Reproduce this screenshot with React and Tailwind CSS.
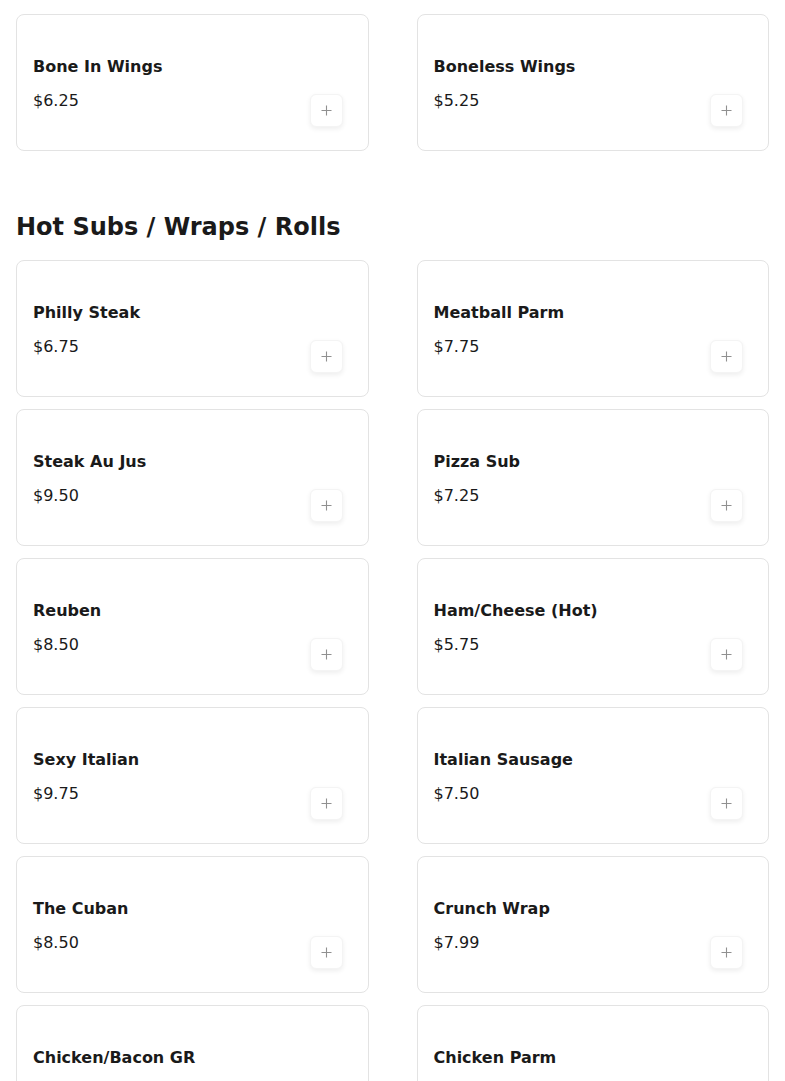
import React from "react";

const wings = [
  { name: "Bone In Wings", price: "$6.25" },
  { name: "Boneless Wings", price: "$5.25" },
];

const subs = [
  { name: "Philly Steak", price: "$6.75" },
  { name: "Meatball Parm", price: "$7.75" },
  { name: "Steak Au Jus", price: "$9.50" },
  { name: "Pizza Sub", price: "$7.25" },
  { name: "Reuben", price: "$8.50" },
  { name: "Ham/Cheese (Hot)", price: "$5.75" },
  { name: "Sexy Italian", price: "$9.75" },
  { name: "Italian Sausage", price: "$7.50" },
  { name: "The Cuban", price: "$8.50" },
  { name: "Crunch Wrap", price: "$7.99" },
  { name: "Chicken/Bacon GR", price: "$8.50" },
  { name: "Chicken Parm", price: "$7.75" },
];

function Card({ item }) {
  return (
    <div className="relative h-[137px] rounded-lg border border-[#e3e3e3] bg-white px-4 pt-[40px]">
      <div className="text-[16px] font-bold leading-6 text-[#1a1a1a]">{item.name}</div>
      <div className="mt-[10px] text-[16px] leading-6 text-[#1a1a1a]">{item.price}</div>
      <button className="absolute right-[25px] bottom-[23px] flex h-[33px] w-[33px] items-center justify-center rounded-md border border-[#f4f4f4] bg-white shadow-[0_2px_5px_rgba(0,0,0,0.07)]">
        <svg width="11" height="11" viewBox="0 0 11 11">
          <path d="M5.5 0.5v10M0.5 5.5h10" stroke="#909090" strokeWidth="1.1" fill="none" />
        </svg>
      </button>
    </div>
  );
}

export default function App() {
  return (
    <div
      className="min-h-screen bg-white px-4 pt-[14px]"
      style={{ fontFamily: '"DejaVu Sans", sans-serif' }}
    >
      <div className="grid grid-cols-2 gap-x-12 gap-y-3">
        {wings.map((it) => (
          <Card key={it.name} item={it} />
        ))}
      </div>
      <h2 className="mt-[60px] mb-[17px] text-[24px] font-bold leading-8 text-[#1a1a1a]">
        Hot Subs / Wraps / Rolls
      </h2>
      <div className="grid grid-cols-2 gap-x-12 gap-y-3">
        {subs.map((it) => (
          <Card key={it.name} item={it} />
        ))}
      </div>
    </div>
  );
}
